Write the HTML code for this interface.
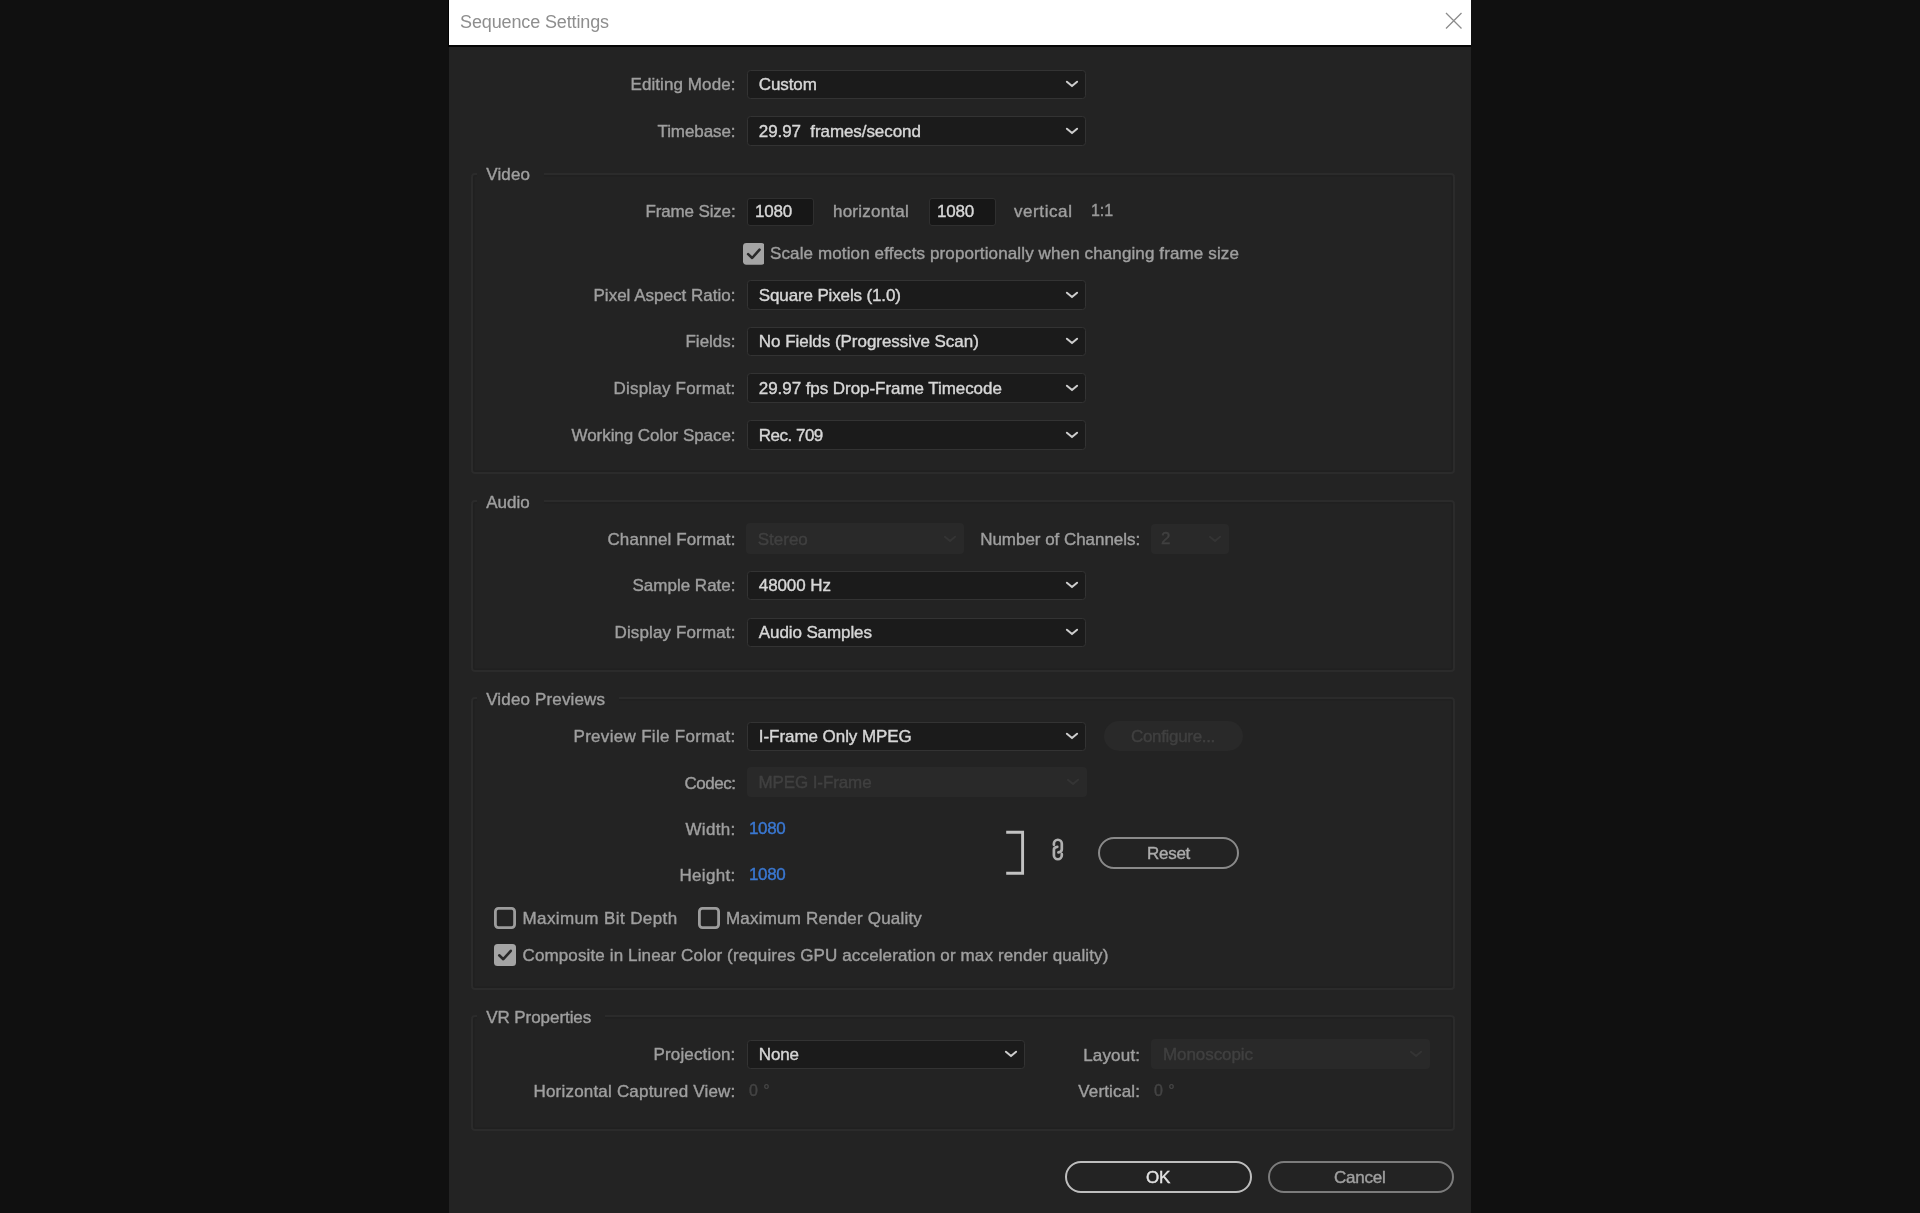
<!DOCTYPE html>
<html><head><meta charset="utf-8"><title>Sequence Settings</title>
<style>
html,body{margin:0;padding:0;}
body{width:1920px;height:1213px;background:#101010;position:relative;overflow:hidden;font-family:"Liberation Sans",sans-serif;}
#w{position:absolute;left:0;top:0;width:1920px;height:1213px;will-change:transform;filter:blur(0.55px);}
.t{position:absolute;white-space:pre;line-height:24px;height:24px;font-family:"Liberation Sans",sans-serif;}
</style></head><body><div id="w">
<div style="position:absolute;left:447.8px;top:0px;width:1.2px;height:47px;background:#030303;"></div>
<div style="position:absolute;left:449px;top:0px;width:1022px;height:1213px;background:#232323;"></div>
<div style="position:absolute;left:449px;top:0px;width:1022px;height:45.3px;background:#ffffff;"></div>
<div style="position:absolute;left:449px;top:45.3px;width:1022px;height:1.6px;background:#060606;"></div>
<svg style="position:absolute;left:1444px;top:11px" width="20" height="20" viewBox="0 0 20 20"><path d="M2 2 L17.5 17.5 M17.5 2 L2 17.5" stroke="#8c8c8c" stroke-width="1.3" fill="none"/></svg>
<div style="position:absolute;left:747.3px;top:69.55px;width:338.7px;height:29.5px;background:#1b1b1b;border:1px solid #333333;border-radius:3.5px;box-sizing:border-box;"></div>
<svg style="position:absolute;left:1063.5px;top:78.0px" width="16" height="12" viewBox="0 0 16 12"><path d="M2.9 3.7 L8 8.1 L13.1 3.7" fill="none" stroke="#cdcdcd" stroke-width="2.0" stroke-linecap="round" stroke-linejoin="round"/></svg>
<div style="position:absolute;left:747.3px;top:116.15px;width:338.7px;height:29.5px;background:#1b1b1b;border:1px solid #333333;border-radius:3.5px;box-sizing:border-box;"></div>
<svg style="position:absolute;left:1063.5px;top:124.6px" width="16" height="12" viewBox="0 0 16 12"><path d="M2.9 3.7 L8 8.1 L13.1 3.7" fill="none" stroke="#cdcdcd" stroke-width="2.0" stroke-linecap="round" stroke-linejoin="round"/></svg>
<div style="position:absolute;left:470.95px;top:172.55px;width:983.8999999999999px;height:301.3px;border:2.5px solid #2b2b2b;box-sizing:border-box;border-radius:4px;box-shadow:inset 0 0 0 1.5px #202020;"></div>
<div style="position:absolute;left:477.2px;top:170.8px;width:67px;height:8px;background:#232323;"></div>
<div style="position:absolute;left:747px;top:197.5px;width:67px;height:28px;background:#171717;border:1px solid #2f2f2f;border-radius:3px;box-sizing:border-box;"></div>
<div style="position:absolute;left:929px;top:197.5px;width:67px;height:28px;background:#171717;border:1px solid #2f2f2f;border-radius:3px;box-sizing:border-box;"></div>
<svg style="position:absolute;left:742.5px;top:243px" width="21.7" height="21.7" viewBox="0 0 22 22"><rect x="0" y="0" width="22" height="22" rx="3.5" fill="#a4a4a4"/><path d="M5.2 11.3 L9.3 15.2 L16.8 6.8" fill="none" stroke="#2a2a2a" stroke-width="2.6" stroke-linecap="round" stroke-linejoin="round"/></svg>
<div style="position:absolute;left:747.3px;top:280.15px;width:338.7px;height:29.5px;background:#1b1b1b;border:1px solid #333333;border-radius:3.5px;box-sizing:border-box;"></div>
<svg style="position:absolute;left:1063.5px;top:288.59999999999997px" width="16" height="12" viewBox="0 0 16 12"><path d="M2.9 3.7 L8 8.1 L13.1 3.7" fill="none" stroke="#cdcdcd" stroke-width="2.0" stroke-linecap="round" stroke-linejoin="round"/></svg>
<div style="position:absolute;left:747.3px;top:326.75px;width:338.7px;height:29.5px;background:#1b1b1b;border:1px solid #333333;border-radius:3.5px;box-sizing:border-box;"></div>
<svg style="position:absolute;left:1063.5px;top:335.2px" width="16" height="12" viewBox="0 0 16 12"><path d="M2.9 3.7 L8 8.1 L13.1 3.7" fill="none" stroke="#cdcdcd" stroke-width="2.0" stroke-linecap="round" stroke-linejoin="round"/></svg>
<div style="position:absolute;left:747.3px;top:373.45px;width:338.7px;height:29.5px;background:#1b1b1b;border:1px solid #333333;border-radius:3.5px;box-sizing:border-box;"></div>
<svg style="position:absolute;left:1063.5px;top:381.9px" width="16" height="12" viewBox="0 0 16 12"><path d="M2.9 3.7 L8 8.1 L13.1 3.7" fill="none" stroke="#cdcdcd" stroke-width="2.0" stroke-linecap="round" stroke-linejoin="round"/></svg>
<div style="position:absolute;left:747.3px;top:420.05px;width:338.7px;height:29.5px;background:#1b1b1b;border:1px solid #333333;border-radius:3.5px;box-sizing:border-box;"></div>
<svg style="position:absolute;left:1063.5px;top:428.5px" width="16" height="12" viewBox="0 0 16 12"><path d="M2.9 3.7 L8 8.1 L13.1 3.7" fill="none" stroke="#cdcdcd" stroke-width="2.0" stroke-linecap="round" stroke-linejoin="round"/></svg>
<div style="position:absolute;left:470.95px;top:500.15px;width:983.8999999999999px;height:171.70000000000005px;border:2.5px solid #2b2b2b;box-sizing:border-box;border-radius:4px;box-shadow:inset 0 0 0 1.5px #202020;"></div>
<div style="position:absolute;left:477.2px;top:498.4px;width:66.5px;height:8px;background:#232323;"></div>
<div style="position:absolute;left:745.8px;top:523.3px;width:218.2px;height:31px;background:#292929;border-radius:4px;"></div>
<svg style="position:absolute;left:941.5px;top:532.5px" width="16" height="12" viewBox="0 0 16 12"><path d="M2.9 3.7 L8 8.1 L13.1 3.7" fill="none" stroke="#343434" stroke-width="2" stroke-linecap="round" stroke-linejoin="round"/></svg>
<div style="position:absolute;left:1151px;top:524.2px;width:78px;height:30px;background:#292929;border-radius:4px;"></div>
<svg style="position:absolute;left:1206.5px;top:532.9000000000001px" width="16" height="12" viewBox="0 0 16 12"><path d="M2.9 3.7 L8 8.1 L13.1 3.7" fill="none" stroke="#343434" stroke-width="2" stroke-linecap="round" stroke-linejoin="round"/></svg>
<div style="position:absolute;left:747.3px;top:570.75px;width:338.7px;height:29.5px;background:#1b1b1b;border:1px solid #333333;border-radius:3.5px;box-sizing:border-box;"></div>
<svg style="position:absolute;left:1063.5px;top:579.2px" width="16" height="12" viewBox="0 0 16 12"><path d="M2.9 3.7 L8 8.1 L13.1 3.7" fill="none" stroke="#cdcdcd" stroke-width="2.0" stroke-linecap="round" stroke-linejoin="round"/></svg>
<div style="position:absolute;left:747.3px;top:617.55px;width:338.7px;height:29.5px;background:#1b1b1b;border:1px solid #333333;border-radius:3.5px;box-sizing:border-box;"></div>
<svg style="position:absolute;left:1063.5px;top:626.0px" width="16" height="12" viewBox="0 0 16 12"><path d="M2.9 3.7 L8 8.1 L13.1 3.7" fill="none" stroke="#cdcdcd" stroke-width="2.0" stroke-linecap="round" stroke-linejoin="round"/></svg>
<div style="position:absolute;left:470.95px;top:696.55px;width:983.8999999999999px;height:293.1px;border:2.5px solid #2b2b2b;box-sizing:border-box;border-radius:4px;box-shadow:inset 0 0 0 1.5px #202020;"></div>
<div style="position:absolute;left:477.2px;top:694.8px;width:142px;height:8px;background:#232323;"></div>
<div style="position:absolute;left:747.3px;top:721.55px;width:338.7px;height:29.5px;background:#1b1b1b;border:1px solid #333333;border-radius:3.5px;box-sizing:border-box;"></div>
<svg style="position:absolute;left:1063.5px;top:730.0px" width="16" height="12" viewBox="0 0 16 12"><path d="M2.9 3.7 L8 8.1 L13.1 3.7" fill="none" stroke="#cdcdcd" stroke-width="2.0" stroke-linecap="round" stroke-linejoin="round"/></svg>
<div style="position:absolute;left:1104px;top:721.3px;width:139px;height:30px;background:#292929;border-radius:15px;"></div>
<div style="position:absolute;left:746.5px;top:767.2px;width:340.5px;height:30px;background:#292929;border-radius:4px;"></div>
<svg style="position:absolute;left:1064.5px;top:775.9000000000001px" width="16" height="12" viewBox="0 0 16 12"><path d="M2.9 3.7 L8 8.1 L13.1 3.7" fill="none" stroke="#343434" stroke-width="2" stroke-linecap="round" stroke-linejoin="round"/></svg>
<svg style="position:absolute;left:1000px;top:825px" width="30" height="56" viewBox="0 0 30 56"><path d="M6.2 7.2 L22.6 7.2 L22.6 48.2 L6.2 48.2" fill="none" stroke="#c2c2c2" stroke-width="2.9"/></svg>
<svg style="position:absolute;left:1040px;top:828px" width="36" height="44" viewBox="0 0 36 44"><g fill="none" stroke="#b0b0b0" stroke-width="2.7" stroke-linecap="round" stroke-linejoin="round"><path d="M13.9 16.8 L13.9 15.7 A3.95 3.95 0 0 1 21.8 15.7 L21.8 21.2 Q21.8 24.0 18.4 24.3"/><path d="M21.8 26.2 L21.8 27.3 A3.95 3.95 0 0 1 13.9 27.3 L13.9 21.8 Q13.9 19.0 17.3 18.8"/></g></svg>
<div style="position:absolute;left:1098px;top:836.6px;width:140.5px;height:32.19999999999993px;border:2px solid #8a8a8a;border-radius:16.099999999999966px;box-sizing:border-box;"></div>
<svg style="position:absolute;left:494.2px;top:907.2px" width="22" height="22" viewBox="0 0 22 22"><rect x="1.4" y="1.4" width="19.2" height="19.2" rx="3" fill="none" stroke="#9c9c9c" stroke-width="2.8"/></svg>
<svg style="position:absolute;left:697.5px;top:907.2px" width="22" height="22" viewBox="0 0 22 22"><rect x="1.4" y="1.4" width="19.2" height="19.2" rx="3" fill="none" stroke="#9c9c9c" stroke-width="2.8"/></svg>
<svg style="position:absolute;left:494.2px;top:944.2px" width="22" height="22" viewBox="0 0 22 22"><rect x="0" y="0" width="22" height="22" rx="3.5" fill="#a4a4a4"/><path d="M5.2 11.3 L9.3 15.2 L16.8 6.8" fill="none" stroke="#2a2a2a" stroke-width="2.6" stroke-linecap="round" stroke-linejoin="round"/></svg>
<div style="position:absolute;left:470.95px;top:1014.75px;width:983.8999999999999px;height:116.29999999999995px;border:2.5px solid #2b2b2b;box-sizing:border-box;border-radius:4px;box-shadow:inset 0 0 0 1.5px #202020;"></div>
<div style="position:absolute;left:477.2px;top:1013px;width:128px;height:8px;background:#232323;"></div>
<div style="position:absolute;left:747.3px;top:1039.75px;width:277.7px;height:29.5px;background:#1b1b1b;border:1px solid #333333;border-radius:3.5px;box-sizing:border-box;"></div>
<svg style="position:absolute;left:1002.5px;top:1048.2px" width="16" height="12" viewBox="0 0 16 12"><path d="M2.9 3.7 L8 8.1 L13.1 3.7" fill="none" stroke="#cdcdcd" stroke-width="2.0" stroke-linecap="round" stroke-linejoin="round"/></svg>
<div style="position:absolute;left:1151px;top:1039.3px;width:279px;height:30px;background:#292929;border-radius:4px;"></div>
<svg style="position:absolute;left:1407.5px;top:1048.0px" width="16" height="12" viewBox="0 0 16 12"><path d="M2.9 3.7 L8 8.1 L13.1 3.7" fill="none" stroke="#343434" stroke-width="2" stroke-linecap="round" stroke-linejoin="round"/></svg>
<div style="position:absolute;left:1065.3px;top:1160.8px;width:186.5px;height:32.200000000000045px;border:2px solid #bebebe;border-radius:16.100000000000023px;box-sizing:border-box;"></div>
<div style="position:absolute;left:1267.6px;top:1160.8px;width:186.60000000000014px;height:32.200000000000045px;border:2px solid #7c7c7c;border-radius:16.100000000000023px;box-sizing:border-box;"></div>
<div class="t" style="left:460.00px;top:10px;font-size:18px;color:#8e8e8e;letter-spacing:-0.125px;-webkit-text-stroke:0px #8e8e8e">Sequence Settings</div>
<div class="t" style="left:630.50px;top:73px;font-size:17px;color:#9f9f9f;letter-spacing:0.081px;-webkit-text-stroke:0.4px #9f9f9f">Editing Mode:</div>
<div class="t" style="left:758.80px;top:73px;font-size:17px;color:#d7d7d7;letter-spacing:-0.096px;-webkit-text-stroke:0.4px #d7d7d7">Custom</div>
<div class="t" style="left:657.50px;top:120px;font-size:17px;color:#9f9f9f;letter-spacing:-0.082px;-webkit-text-stroke:0.4px #9f9f9f">Timebase:</div>
<div class="t" style="left:758.80px;top:120px;font-size:17px;color:#d7d7d7;letter-spacing:-0.074px;-webkit-text-stroke:0.4px #d7d7d7">29.97  frames/second</div>
<div class="t" style="left:486.20px;top:163px;font-size:17px;color:#9f9f9f;letter-spacing:0.163px;-webkit-text-stroke:0.4px #9f9f9f">Video</div>
<div class="t" style="left:645.50px;top:200px;font-size:17px;color:#9f9f9f;letter-spacing:-0.149px;-webkit-text-stroke:0.4px #9f9f9f">Frame Size:</div>
<div class="t" style="left:755.00px;top:200px;font-size:17px;color:#d7d7d7;letter-spacing:-0.207px;-webkit-text-stroke:0.4px #d7d7d7">1080</div>
<div class="t" style="left:833.00px;top:200px;font-size:17px;color:#9f9f9f;letter-spacing:0.228px;-webkit-text-stroke:0.4px #9f9f9f">horizontal</div>
<div class="t" style="left:937.00px;top:200px;font-size:17px;color:#d7d7d7;letter-spacing:-0.207px;-webkit-text-stroke:0.4px #d7d7d7">1080</div>
<div class="t" style="left:1014.00px;top:200px;font-size:17px;color:#9f9f9f;letter-spacing:0.580px;-webkit-text-stroke:0.4px #9f9f9f">vertical</div>
<div class="t" style="left:1091.00px;top:199px;font-size:16px;color:#989898;letter-spacing:-0.083px;-webkit-text-stroke:0.4px #989898">1:1</div>
<div class="t" style="left:770.00px;top:242px;font-size:17px;color:#9f9f9f;letter-spacing:0.120px;-webkit-text-stroke:0.4px #9f9f9f">Scale motion effects proportionally when changing frame size</div>
<div class="t" style="left:593.50px;top:284px;font-size:17px;color:#9f9f9f;letter-spacing:0.013px;-webkit-text-stroke:0.4px #9f9f9f">Pixel Aspect Ratio:</div>
<div class="t" style="left:758.80px;top:284px;font-size:17px;color:#d7d7d7;letter-spacing:-0.136px;-webkit-text-stroke:0.4px #d7d7d7">Square Pixels (1.0)</div>
<div class="t" style="left:685.50px;top:330px;font-size:17px;color:#9f9f9f;letter-spacing:-0.011px;-webkit-text-stroke:0.4px #9f9f9f">Fields:</div>
<div class="t" style="left:758.80px;top:330px;font-size:17px;color:#d7d7d7;letter-spacing:-0.039px;-webkit-text-stroke:0.4px #d7d7d7">No Fields (Progressive Scan)</div>
<div class="t" style="left:613.50px;top:377px;font-size:17px;color:#9f9f9f;letter-spacing:0.198px;-webkit-text-stroke:0.4px #9f9f9f">Display Format:</div>
<div class="t" style="left:758.80px;top:377px;font-size:17px;color:#d7d7d7;letter-spacing:-0.059px;-webkit-text-stroke:0.4px #d7d7d7">29.97 fps Drop-Frame Timecode</div>
<div class="t" style="left:571.50px;top:424px;font-size:17px;color:#9f9f9f;letter-spacing:-0.052px;-webkit-text-stroke:0.4px #9f9f9f">Working Color Space:</div>
<div class="t" style="left:758.80px;top:424px;font-size:17px;color:#d7d7d7;letter-spacing:-0.506px;-webkit-text-stroke:0.4px #d7d7d7">Rec. 709</div>
<div class="t" style="left:486.20px;top:491px;font-size:17px;color:#9f9f9f;letter-spacing:0.003px;-webkit-text-stroke:0.4px #9f9f9f">Audio</div>
<div class="t" style="left:607.50px;top:528px;font-size:17px;color:#9f9f9f;letter-spacing:0.092px;-webkit-text-stroke:0.4px #9f9f9f">Channel Format:</div>
<div class="t" style="left:757.80px;top:528px;font-size:17px;color:#404040;letter-spacing:-0.016px;-webkit-text-stroke:0.4px #404040">Stereo</div>
<div class="t" style="left:980.20px;top:528px;font-size:17px;color:#9f9f9f;letter-spacing:-0.034px;-webkit-text-stroke:0.4px #9f9f9f">Number of Channels:</div>
<div class="t" style="left:1161.00px;top:527px;font-size:17px;color:#404040;letter-spacing:0.000px;-webkit-text-stroke:0.4px #404040">2</div>
<div class="t" style="left:632.50px;top:574px;font-size:17px;color:#9f9f9f;letter-spacing:0.000px;-webkit-text-stroke:0.4px #9f9f9f">Sample Rate:</div>
<div class="t" style="left:758.80px;top:574px;font-size:17px;color:#d7d7d7;letter-spacing:-0.098px;-webkit-text-stroke:0.4px #d7d7d7">48000 Hz</div>
<div class="t" style="left:614.50px;top:621px;font-size:17px;color:#9f9f9f;letter-spacing:0.131px;-webkit-text-stroke:0.4px #9f9f9f">Display Format:</div>
<div class="t" style="left:758.80px;top:621px;font-size:17px;color:#d7d7d7;letter-spacing:-0.103px;-webkit-text-stroke:0.4px #d7d7d7">Audio Samples</div>
<div class="t" style="left:486.20px;top:688px;font-size:17px;color:#9f9f9f;letter-spacing:0.153px;-webkit-text-stroke:0.4px #9f9f9f">Video Previews</div>
<div class="t" style="left:573.50px;top:725px;font-size:17px;color:#9f9f9f;letter-spacing:0.306px;-webkit-text-stroke:0.4px #9f9f9f">Preview File Format:</div>
<div class="t" style="left:758.80px;top:725px;font-size:17px;color:#d7d7d7;letter-spacing:-0.057px;-webkit-text-stroke:0.4px #d7d7d7">I-Frame Only MPEG</div>
<div class="t" style="left:1131.00px;top:725px;font-size:17px;color:#404040;letter-spacing:-0.324px;-webkit-text-stroke:0.4px #404040">Configure...</div>
<div class="t" style="left:684.50px;top:772px;font-size:17px;color:#9f9f9f;letter-spacing:-0.479px;-webkit-text-stroke:0.4px #9f9f9f">Codec:</div>
<div class="t" style="left:758.50px;top:771px;font-size:17px;color:#404040;letter-spacing:-0.108px;-webkit-text-stroke:0.4px #404040">MPEG I-Frame</div>
<div class="t" style="left:685.50px;top:818px;font-size:17px;color:#9f9f9f;letter-spacing:0.302px;-webkit-text-stroke:0.4px #9f9f9f">Width:</div>
<div class="t" style="left:749.00px;top:817px;font-size:17px;color:#3a78d2;letter-spacing:-0.332px;-webkit-text-stroke:0.4px #3a78d2">1080</div>
<div class="t" style="left:679.50px;top:864px;font-size:17px;color:#9f9f9f;letter-spacing:0.304px;-webkit-text-stroke:0.4px #9f9f9f">Height:</div>
<div class="t" style="left:749.00px;top:863px;font-size:17px;color:#3a78d2;letter-spacing:-0.332px;-webkit-text-stroke:0.4px #3a78d2">1080</div>
<div class="t" style="left:1147.00px;top:842px;font-size:17px;color:#acacac;letter-spacing:-0.284px;-webkit-text-stroke:0.4px #acacac">Reset</div>
<div class="t" style="left:522.50px;top:907px;font-size:17px;color:#9f9f9f;letter-spacing:0.392px;-webkit-text-stroke:0.4px #9f9f9f">Maximum Bit Depth</div>
<div class="t" style="left:726.00px;top:907px;font-size:17px;color:#9f9f9f;letter-spacing:0.192px;-webkit-text-stroke:0.4px #9f9f9f">Maximum Render Quality</div>
<div class="t" style="left:522.50px;top:944px;font-size:17px;color:#9f9f9f;letter-spacing:0.129px;-webkit-text-stroke:0.4px #9f9f9f">Composite in Linear Color (requires GPU acceleration or max render quality)</div>
<div class="t" style="left:486.20px;top:1006px;font-size:17px;color:#9f9f9f;letter-spacing:-0.064px;-webkit-text-stroke:0.4px #9f9f9f">VR Properties</div>
<div class="t" style="left:653.50px;top:1043px;font-size:17px;color:#9f9f9f;letter-spacing:0.152px;-webkit-text-stroke:0.4px #9f9f9f">Projection:</div>
<div class="t" style="left:758.80px;top:1043px;font-size:17px;color:#d7d7d7;letter-spacing:-0.160px;-webkit-text-stroke:0.4px #d7d7d7">None</div>
<div class="t" style="left:1083.20px;top:1044px;font-size:17px;color:#9f9f9f;letter-spacing:0.176px;-webkit-text-stroke:0.4px #9f9f9f">Layout:</div>
<div class="t" style="left:1163.00px;top:1043px;font-size:17px;color:#404040;letter-spacing:-0.072px;-webkit-text-stroke:0.4px #404040">Monoscopic</div>
<div class="t" style="left:533.50px;top:1080px;font-size:17px;color:#9f9f9f;letter-spacing:0.193px;-webkit-text-stroke:0.4px #9f9f9f">Horizontal Captured View:</div>
<div class="t" style="left:749.00px;top:1079px;font-size:16px;color:#444444;letter-spacing:0.417px;-webkit-text-stroke:0.4px #444444">0 °</div>
<div class="t" style="left:1078.20px;top:1080px;font-size:17px;color:#9f9f9f;letter-spacing:0.168px;-webkit-text-stroke:0.4px #9f9f9f">Vertical:</div>
<div class="t" style="left:1154.00px;top:1079px;font-size:16px;color:#444444;letter-spacing:0.417px;-webkit-text-stroke:0.4px #444444">0 °</div>
<div class="t" style="left:1146.00px;top:1166px;font-size:17px;color:#e2e2e2;letter-spacing:-0.281px;-webkit-text-stroke:0.4px #e2e2e2">OK</div>
<div class="t" style="left:1334.00px;top:1166px;font-size:17px;color:#a0a0a0;letter-spacing:-0.237px;-webkit-text-stroke:0.4px #a0a0a0">Cancel</div>
</div></body></html>
